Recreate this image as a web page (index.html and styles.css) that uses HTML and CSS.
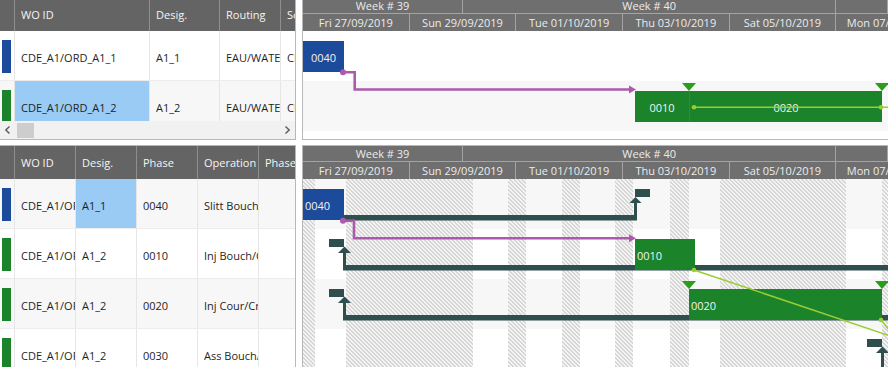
FILE: index.html
```html
<!DOCTYPE html>
<html lang="fr">
<head>
<meta charset="utf-8">
<title>Gantt</title>
<link rel="stylesheet" href="styles.css">
</head>
<body>
<div class="app">

  <!-- TOP LEFT : work orders grid -->
  <section class="panel tl">
    <div class="ghead">
      <div class="hc ind"></div>
      <div class="hc c-wo"><span class="t">WO ID</span></div>
      <div class="hc c-des"><span class="t">Desig.</span></div>
      <div class="hc c-rt"><span class="t">Routing</span></div>
      <div class="hc c-rest"><span class="t">Sequence</span></div>
    </div>
    <div class="lbody top">
      <div class="grow">
        <div class="c ind"><i class="flag blue"></i></div>
        <div class="c c-wo"><span class="t">CDE_A1/ORD_A1_1</span></div>
        <div class="c c-des"><span class="t">A1_1</span></div>
        <div class="c c-rt"><span class="t">EAU/WATER</span></div>
        <div class="c c-rest"><span class="t">CDE_A1</span></div>
      </div>
      <div class="grow alt">
        <div class="c ind"><i class="flag green"></i></div>
        <div class="c c-wo sel"><span class="t">CDE_A1/ORD_A1_2</span></div>
        <div class="c c-des"><span class="t">A1_2</span></div>
        <div class="c c-rt"><span class="t">EAU/WATER</span></div>
        <div class="c c-rest"><span class="t">CDE_A1</span></div>
      </div>
    </div>
    <div class="hscroll">
      <span class="sbtn"><svg width="16" height="18" viewBox="0 0 16 18"><path d="M9.5 5.5 L5.8 9 L9.5 12.5" fill="none" stroke="#5a5a5a" stroke-width="1.4"/></svg></span>
      <span class="thumb"></span>
      <span class="track"></span>
      <span class="sbtn"><svg width="16" height="18" viewBox="0 0 16 18"><path d="M6.5 5.5 L10.2 9 L6.5 12.5" fill="none" stroke="#5a5a5a" stroke-width="1.4"/></svg></span>
    </div>
  </section>

  <!-- TOP RIGHT : work orders gantt -->
  <section class="panel tr">
    <div class="thead">
      <div class="weeks"><div class="wk">Week # 39</div><div class="wk">Week # 40</div><div class="wk"></div></div>
      <div class="dates">
        <div class="dt">Fri 27/09/2019</div><div class="dt">Sun 29/09/2019</div><div class="dt">Tue 01/10/2019</div>
        <div class="dt">Thu 03/10/2019</div><div class="dt">Sat 05/10/2019</div><div class="dt">Mon 07/10/2019</div>
      </div>
    </div>
    <div class="gbody gtop">
      <div class="bar blue center" style="left:0;top:10px;width:41px">0040</div>
      <div class="bar green center" style="left:332px;top:60px;width:54px">0010</div>
      <div class="bar green center joined" style="left:386px;top:60px;width:193px">0020</div>
      <svg class="ov over" width="585" height="108" viewBox="0 0 585 108">
        <path d="M40 41.2 H51.7 V58.5 H327" fill="none" stroke="#ad5aad" stroke-width="2.6"/>
        <circle cx="40" cy="41.2" r="3" fill="#ad5aad"/>
        <polygon points="326,54.5 333,58.5 326,62.5" fill="#ad5aad"/>
        <polygon points="379,52 393,52 386,60" fill="#2a9d1e"/>
        <polygon points="572,52 586,52 579,60" fill="#2a9d1e"/>
        <line x1="391" y1="76.3" x2="590" y2="76.3" stroke="#9acd32" stroke-width="1.5"/>
        <circle cx="391" cy="76.3" r="2.3" fill="#9acd32"/>
        <circle cx="578" cy="76.3" r="2.3" fill="#9acd32"/>
      </svg>
    </div>
  </section>

  <!-- BOTTOM LEFT : phases grid -->
  <section class="panel bl">
    <div class="ghead">
      <div class="hc ind"></div>
      <div class="hc c-w61"><span class="t">WO ID</span></div>
      <div class="hc c-w61"><span class="t">Desig.</span></div>
      <div class="hc c-w61"><span class="t">Phase</span></div>
      <div class="hc c-w61"><span class="t">Operation</span></div>
      <div class="hc c-rest"><span class="t">Phase</span></div>
    </div>
    <div class="lbody">
      <div class="grow alt">
        <div class="c ind"><i class="flag blue"></i></div>
        <div class="c c-w61"><span class="t">CDE_A1/ORD_A1_1</span></div>
        <div class="c c-w61 sel"><span class="t">A1_1</span></div>
        <div class="c c-w61"><span class="t">0040</span></div>
        <div class="c c-w61"><span class="t">Slitt Bouchon</span></div>
        <div class="c c-rest"></div>
      </div>
      <div class="grow">
        <div class="c ind"><i class="flag green"></i></div>
        <div class="c c-w61"><span class="t">CDE_A1/ORD_A1_2</span></div>
        <div class="c c-w61"><span class="t">A1_2</span></div>
        <div class="c c-w61"><span class="t">0010</span></div>
        <div class="c c-w61"><span class="t">Inj Bouch/Capot</span></div>
        <div class="c c-rest"></div>
      </div>
      <div class="grow alt">
        <div class="c ind"><i class="flag green"></i></div>
        <div class="c c-w61"><span class="t">CDE_A1/ORD_A1_2</span></div>
        <div class="c c-w61"><span class="t">A1_2</span></div>
        <div class="c c-w61"><span class="t">0020</span></div>
        <div class="c c-w61"><span class="t">Inj Cour/Crochet</span></div>
        <div class="c c-rest"></div>
      </div>
      <div class="grow">
        <div class="c ind"><i class="flag green"></i></div>
        <div class="c c-w61"><span class="t">CDE_A1/ORD_A1_2</span></div>
        <div class="c c-w61"><span class="t">A1_2</span></div>
        <div class="c c-w61"><span class="t">0030</span></div>
        <div class="c c-w61"><span class="t">Ass Bouch/Cour</span></div>
        <div class="c c-rest"></div>
      </div>
    </div>
  </section>

  <!-- BOTTOM RIGHT : phases gantt -->
  <section class="panel br">
    <div class="thead">
      <div class="weeks"><div class="wk">Week # 39</div><div class="wk">Week # 40</div><div class="wk"></div></div>
      <div class="dates">
        <div class="dt">Fri 27/09/2019</div><div class="dt">Sun 29/09/2019</div><div class="dt">Tue 01/10/2019</div>
        <div class="dt">Thu 03/10/2019</div><div class="dt">Sat 05/10/2019</div><div class="dt">Mon 07/10/2019</div>
      </div>
    </div>
    <div class="gbody gbot">
      <div class="off" style="left:0;width:12px"></div>
      <div class="off" style="left:43px;width:127px"></div>
      <div class="off" style="left:205px;width:18px"></div>
      <div class="off" style="left:259px;width:18px"></div>
      <div class="off" style="left:312px;width:18px"></div>
      <div class="off" style="left:367px;width:19px"></div>
      <div class="off" style="left:417px;width:126px"></div>
      <div class="off" style="left:579px;width:20px"></div>

      <svg class="ov under" width="585" height="200" viewBox="0 0 585 200" fill="#2f4f4f">
        <rect x="41" y="36" width="293" height="5.5"/>
        <rect x="331" y="23.5" width="3" height="15"/>
        <polygon points="326.5,24 332.5,18 338.5,24"/>
        <rect x="332" y="10" width="15" height="8"/>

        <rect x="26" y="60" width="15" height="8"/>
        <polygon points="35,74 41.5,67.5 48,74"/>
        <rect x="40" y="73.5" width="3" height="15"/>
        <rect x="40" y="86" width="560" height="5.5"/>

        <rect x="26" y="110" width="15" height="8"/>
        <polygon points="35,124 41.5,117.5 48,124"/>
        <rect x="40" y="123.5" width="3" height="15"/>
        <rect x="40" y="136" width="560" height="5.5"/>

        <rect x="564" y="160" width="15" height="8"/>
        <polygon points="573,174 579.5,167.5 586,174"/>
        <rect x="578" y="173.5" width="3" height="40"/>
      </svg>

      <div class="bar blue left" style="left:0;top:10px;width:41px">0040</div>
      <div class="bar green left" style="left:332px;top:60px;width:60px">0010</div>
      <div class="bar green left" style="left:386px;top:110px;width:193px">0020</div>

      <svg class="ov over" width="585" height="200" viewBox="0 0 585 200">
        <path d="M40 41.8 H51 V59.2 H327" fill="none" stroke="#ad5aad" stroke-width="2.6"/>
        <circle cx="40" cy="41.8" r="3" fill="#ad5aad"/>
        <polygon points="326,55.2 333,59.2 326,63.2" fill="#ad5aad"/>
        <polygon points="379,102 393,102 386,110" fill="#2a9d1e"/>
        <polygon points="572,102 586,102 579,110" fill="#2a9d1e"/>
        <line x1="391" y1="91" x2="605" y2="163" stroke="#9acd32" stroke-width="1.5"/>
        <line x1="578" y1="141" x2="592" y2="158" stroke="#9acd32" stroke-width="1.5"/>
        <circle cx="391" cy="91" r="2.3" fill="#9acd32"/>
        <circle cx="578" cy="141" r="2.3" fill="#9acd32"/>
      </svg>
    </div>
  </section>

</div>
</body>
</html>
```

FILE: styles.css
```css
* { box-sizing: border-box; }

html, body { margin: 0; padding: 0; }

body {
  width: 888px;
  height: 367px;
  overflow: hidden;
  background: #ffffff;
  font-family: "Open Sans", "Noto Sans", sans-serif;
  font-size: 11px;
  color: #1f1f1f;
}

.app {
  display: grid;
  grid-template-columns: 296px 586px;
  grid-template-rows: 142px 240px;
  column-gap: 6px;
  row-gap: 5px;
  margin-top: -2px;
}

.panel {
  position: relative;
  overflow: hidden;
  background: #ffffff;
  display: flex;
  flex-direction: column;
}

.tl { border-right: 1px solid #b8b8b8; border-bottom: 1px solid #b8b8b8; }
.tr { border-left: 1px solid #b8b8b8; border-bottom: 1px solid #b8b8b8; }
.bl { border-right: 1px solid #b8b8b8; border-top: 1px solid #b8b8b8; }
.br { border-left: 1px solid #b8b8b8; border-top: 1px solid #b8b8b8; }

/* ---------- left grids ---------- */
.ghead {
  display: flex;
  height: 33px;
  flex: none;
  background: #646464;
  color: #f5f5f5;
}

.hc {
  flex: none;
  display: flex;
  align-items: center;
  padding-left: 6px;
  border-right: 1px solid #8e8e8e;
  white-space: nowrap;
  overflow: hidden;
}

.t {
  display: block;
  min-width: 0;
  flex: 0 1 auto;
  overflow: hidden;
  white-space: nowrap;
  text-overflow: clip;
}

.ind { width: 15px; padding-left: 0; }
.c-wo { width: 135px; }
.c-des { width: 70px; }
.c-rt { width: 61px; }
.c-w61 { width: 61px; }
.c-rest { flex: 1 1 0; min-width: 0; border-right: none; }

.lbody { flex: 1; overflow: hidden; }
.lbody.top { flex: none; height: 90px; }

.grow {
  display: flex;
  height: 50px;
  background: #ffffff;
  border-bottom: 1px solid #ececec;
}
.grow.alt { background: #f7f7f7; }

.c {
  flex: none;
  display: flex;
  align-items: center;
  padding-left: 6px;
  padding-top: 3px;
  border-right: 1px solid #e6e6e6;
  white-space: nowrap;
  overflow: hidden;
}
.c.c-rest { flex: 1 1 0; border-right: none; }
.c.ind { align-items: flex-start; padding-left: 2px; padding-top: 0; }
.c.sel { background: #99cbf5; }

.flag { display: block; width: 9px; height: 33px; margin-top: 9px; }
.flag.blue { background: #1d4b9b; }
.flag.green { background: #1b832a; }

.hscroll {
  flex: none;
  height: 18px;
  display: flex;
  align-items: center;
  background: #f1f1f1;
}
.sbtn { width: 16px; height: 18px; flex: none; display: flex; }
.thumb { width: 17px; height: 15px; margin-left: 1px; background: #cdcdcd; flex: none; }
.track { flex: 1; }

/* ---------- gantt ---------- */
.thead {
  flex: none;
  height: 33px;
  background: #6f6f6f;
  color: #ececec;
}
.weeks {
  display: grid;
  grid-template-columns: 160px 373.333px 1fr;
  height: 16px;
  border-bottom: 1px solid #a4a4a4;
}
.wk {
  border-right: 1px solid #a4a4a4;
  text-align: center;
  line-height: 15px;
  white-space: nowrap;
}
.dates {
  display: grid;
  grid-template-columns: repeat(6, 106.667px);
  height: 17px;
}
.dt {
  border-right: 1px solid #a4a4a4;
  text-align: center;
  line-height: 17px;
  white-space: nowrap;
}

.gbody {
  position: relative;
  overflow: hidden;
  flex: 1;
}
.gtop {
  background: linear-gradient(#ffffff 0 50px, #f7f7f7 50px 100px, #ffffff 100px);
}
.gbot {
  background: repeating-linear-gradient(to bottom, #f7f7f7 0 50px, #ffffff 50px 100px);
}

.off {
  position: absolute;
  top: 0;
  bottom: 0;
  background: repeating-linear-gradient(45deg, #f4f4f4 0 1.45px, #d6d6d6 1.45px 2.83px);
}

.ov { position: absolute; left: 0; top: 0; overflow: visible; }
.ov.under { z-index: 1; }
.ov.over { z-index: 3; }

.bar {
  position: absolute;
  z-index: 2;
  height: 31px;
  padding-top: 1px;
  display: flex;
  align-items: center;
  color: #f2f2f2;
  white-space: nowrap;
  overflow: hidden;
}
.bar.blue { background: #1d4b9b; }
.bar.green { background: #1b832a; }
.bar.center { justify-content: center; }
.bar.left { padding-left: 2px; }
.bar.joined { border-left: 1px solid #2a8f36; }
```
